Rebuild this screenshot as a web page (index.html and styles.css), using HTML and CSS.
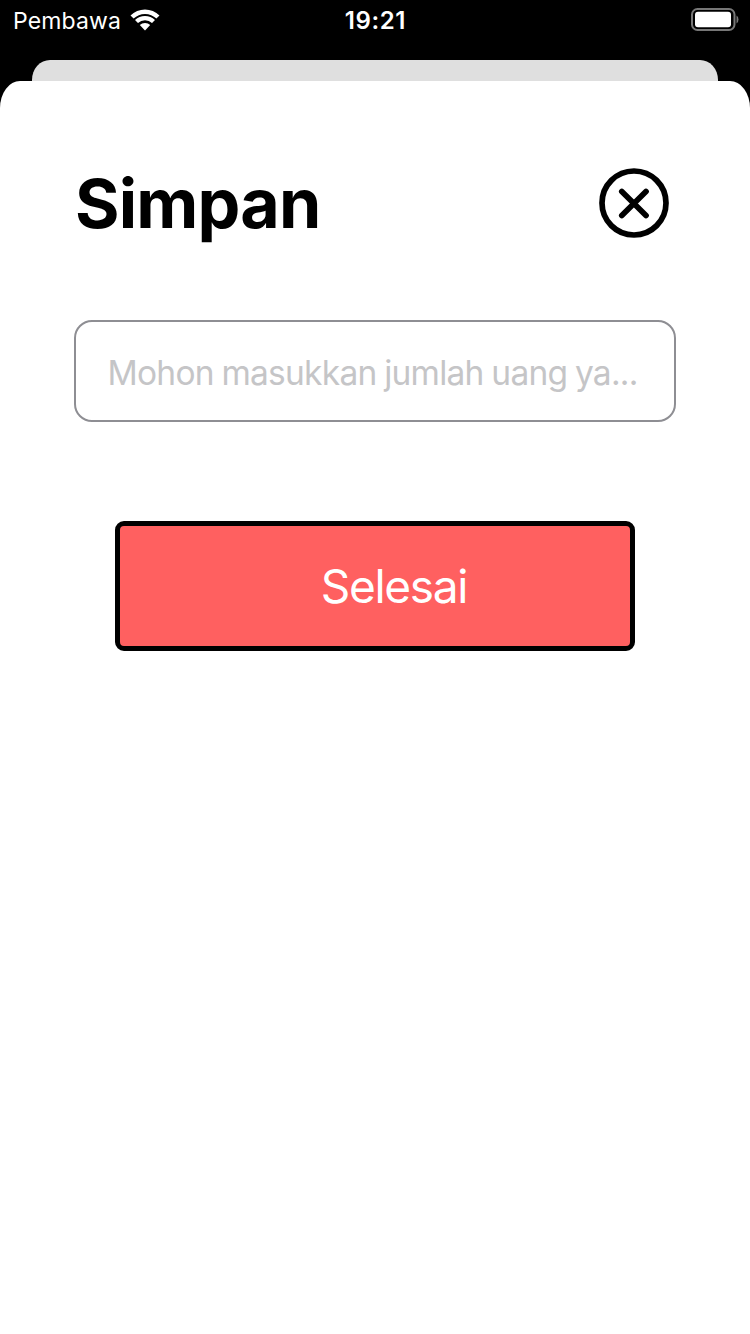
FILE: index.html
```html
<!DOCTYPE html>
<html lang="id">
<head>
<meta charset="utf-8">
<title>Simpan</title>
<link rel="stylesheet" href="styles.css">
</head>
<body>
<header class="status">
  <div class="carrier"><span class="carrier-name">Pembawa</span>
    <svg class="wifi" width="30" height="22" viewBox="0 0 30 22"><path d="M0.5 6.500A20.500 20.500 0 0 1 29.500 6.500L26.400 9.600A16.200 16.200 0 0 0 3.600 9.600Z"/><path d="M5 11A14.200 14.200 0 0 1 25 11L22 14A10 10 0 0 0 8 14Z"/><path d="M9.800 16A7.600 7.600 0 0 1 20.200 16L15 21.500Z"/></svg>
  </div>
  <span class="time">19:21</span>
  <svg class="battery" width="50" height="26" viewBox="0 0 50 26"><rect class="case" x="3" y="2" width="42.500" height="21" rx="5.500"/><rect class="charge" x="6" y="4.800" width="36" height="15.400" rx="3"/><path class="tip" d="M47.500 8.500Q49.500 9.500 49.500 12.500T47.500 16.500Z"/></svg>
</header>
<div class="backdrop"></div>
<main class="sheet">
  <div class="heading">
    <h1 class="title">Simpan</h1>
    <svg class="close" width="70" height="70" viewBox="0 0 70 70"><circle cx="35" cy="35" r="32"/><path d="M22.800 23.400L47 47.600M47 23.400L22.800 47.600"/></svg>
  </div>
  <div class="field"><span class="placeholder">Mohon masukkan jumlah uang ya...</span></div>
  <div class="button"><span class="label">Selesai</span></div>
</main>
</body>
</html>
```
FILE: styles.css
```css
* { box-sizing: border-box; }
body { margin: 0; height: 1334px; background: #000; font-family: Inter, "Liberation Sans", sans-serif; overflow: hidden; display: flex; flex-direction: column; }
.status { height: 60px; flex: none; display: grid; grid-template-columns: 1fr auto 1fr; align-items: start; color: #fff; padding: 6px 11px 0 13px; font-size: 24px; line-height: 30px; }
.carrier { display: flex; gap: 9px; }
.carrier-name { font-size: 23px; letter-spacing: .15px; }
.wifi { margin-top: 3px; fill: #fff; }
.time { font-weight: 600; letter-spacing: .6px; margin-left: -1px; }
.battery { justify-self: end; margin-top: 1px; }
.case { fill: none; stroke: #777; stroke-width: 2; }
.charge { fill: #fff; }
.tip { fill: #777; }
.backdrop { height: 21px; flex: none; margin: 0 32px; background: #dfdfdf; border-radius: 18px 18px 0 0 / 20px 20px 0 0; }
.sheet { flex: 1; background: #fff; border-radius: 20px 20px 0 0 / 27px 27px 0 0; padding: 87px 74px 0; }
.heading { display: flex; justify-content: space-between; align-items: center; height: 70px; padding: 0 7px 0 1px; }
.title { margin: 0; font-size: 68px; line-height: 70px; font-weight: 700; letter-spacing: -.8px; }
.close { fill: none; stroke: #000; stroke-width: 5.700; stroke-linecap: round; }
.field { margin-top: 82px; height: 102px; border: 2px solid #8e8e93; border-radius: 18px; display: flex; align-items: center; padding: 3px 0 0 31.5px; }
.placeholder { font-size: 33.5px; color: #c5c5c7; white-space: nowrap; letter-spacing: -.75px; word-spacing: -1px; }
.button { margin: 99px 41px 0; height: 130px; border: 5px solid #000; border-radius: 9px; background: #ff6060; display: flex; align-items: center; justify-content: center; padding: 0 0 0 38px; }
.label { font-size: 46px; color: #fff; letter-spacing: -1.3px; }
```
